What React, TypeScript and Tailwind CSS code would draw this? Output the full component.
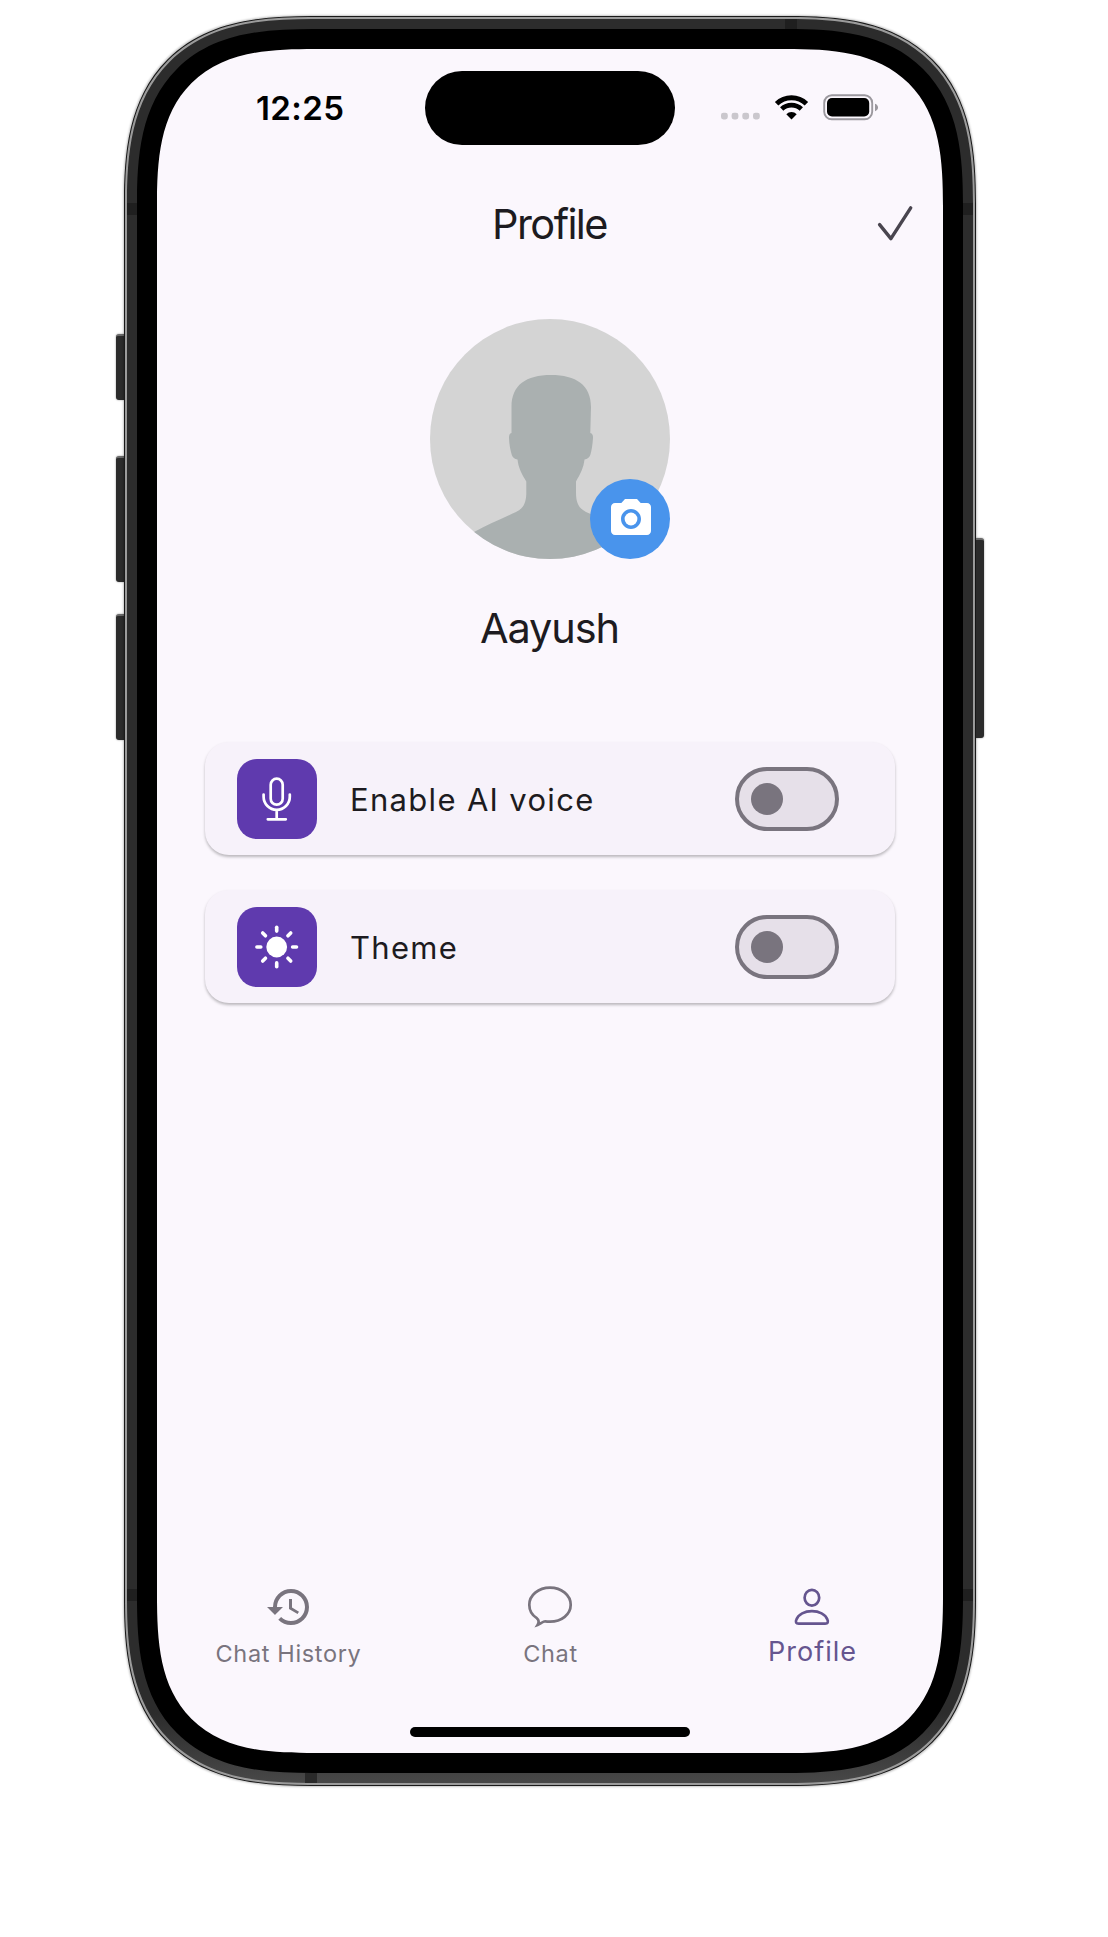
import { MdCameraAlt, MdHistory } from "react-icons/md";
import type { ReactNode } from "react";

function SideButton({ className }: { className: string }) {
  return (
    <div
      className={
        "border-t-2 border-[#6a6a6a] bg-[#2b2b2b] shadow-[0_0_2px_rgba(0,0,0,0.45)] " + className
      }
    />
  );
}

function StatusIcons() {
  return (
    <svg className="h-[30px] w-[160px]" viewBox="0 0 160 30" fill="none">
      <g fill="#cac7cd">
        <rect x="1" y="19.7" width="6.8" height="6.8" rx="2.4" />
        <rect x="11.6" y="19.7" width="6.8" height="6.8" rx="2.4" />
        <rect x="22.3" y="19.7" width="6.8" height="6.8" rx="2.4" />
        <rect x="33" y="19.7" width="6.8" height="6.8" rx="2.4" />
      </g>
      <path d="M56.600 10.700A21.600 21.600 0 0 1 86.400 10.700" stroke="#000" strokeWidth="5" />
      <path d="M61.700 16.100A14.200 14.200 0 0 1 81.300 16.100" stroke="#000" strokeWidth="4.800" />
      <path d="M66.300 21.200A7.300 7.300 0 0 1 76.700 21.200L71.500 26.400Z" fill="#000" />
      <rect x="104.200" y="2.300" width="48" height="24" rx="7.600" stroke="#9b989e" strokeWidth="1.900" />
      <rect x="107" y="5" width="42.200" height="18.500" rx="5" fill="#000" />
      <path d="M155 10.800c1.900.6 3 2 3 3.700s-1.100 3.100-3 3.700Z" fill="#9b989e" />
    </svg>
  );
}

function CheckIcon() {
  return (
    <svg className="mr-7 size-10 justify-self-end" viewBox="0 0 40 40" fill="none" stroke="#49454f" strokeWidth="3.400" strokeLinecap="round" strokeLinejoin="round">
      <path d="M4.600 21.600L15.900 35.600L35.700 4.900" />
    </svg>
  );
}

function Silhouette() {
  return (
    <svg className="size-60 rounded-full bg-[#d4d4d4]" viewBox="0 0 240 240" fill="#aab0b0">
      <path d="M81.500 114V88C81.500 66 96 56 121 56C146 56 161 66 161 88L160.300 114C162.500 114.500 163.200 116.500 163 119C162.600 126 161.500 132 160.300 136C159.300 138.800 157.500 139.800 154.500 140.500C153.500 149 150.500 154.500 146 162.500V173C146 184 148.500 189 156 193C168 198.500 184 204.500 196 210.500L240 240H0L45 212.500C57 206 72 199.500 86 193C93 189.500 95.800 185 96.300 175V162.500C91.500 154.500 88.500 149 87.500 140.500C84.500 140 82.800 138.800 81.800 136C80.300 131 79.200 125 79 119C78.900 116.500 79.500 114.500 81.500 114Z" />
    </svg>
  );
}

function MicIcon() {
  return (
    <svg className="size-20" viewBox="0 0 80 80" fill="none" stroke="#fff" strokeWidth="2.700" strokeLinecap="round">
      <rect x="33.700" y="19.700" width="12" height="26" rx="6" />
      <path d="M26.600 35.500V37.700A13.100 13.100 0 0 0 52.800 37.700V35.500M39.700 51V60M30.800 60.300H48.800" />
    </svg>
  );
}

const rayAngles = [0, 45, 90, 135, 180, 225, 270, 315];

function SunIcon() {
  return (
    <svg className="size-20" viewBox="0 0 80 80" fill="none" stroke="#fff" strokeWidth="3.600" strokeLinecap="round">
      <circle cx="39.700" cy="40" r="10.400" fill="#fff" stroke="none" />
      {rayAngles.map((a) => (
        <path key={a} d="M39.700 24.100V20.200" transform={`rotate(${a} 39.700 40)`} />
      ))}
    </svg>
  );
}

function ChatIcon() {
  return (
    <svg className="size-12" viewBox="0 0 48 48" fill="none" stroke="#79747e" strokeWidth="2.700" strokeLinejoin="miter">
      <path d="M10.800 35.200C6 32.200 3.300 27.400 3.300 21.800C3.300 12.200 12.400 4.600 24 4.600S44.700 12.200 44.700 21.800S35.600 38.700 24 38.700C21.600 38.700 20 38.300 18.300 38.500C15.800 39.200 14 41 11.600 41.900C13 39.600 12.700 36.800 10.800 35.200Z" />
    </svg>
  );
}

function PersonIcon() {
  return (
    <svg className="size-12" viewBox="0 0 48 48" fill="none" stroke="#65558f" strokeWidth="2.700">
      <ellipse cx="23.900" cy="14.700" rx="7.300" ry="7.900" />
      <path d="M10.600 40.600C8 40.600 7.400 39 8.300 36.700C10.300 31.200 16.800 28.200 23.900 28.200S37.500 31.200 39.500 36.700C40.400 39 39.800 40.600 37.200 40.600Z" />
    </svg>
  );
}

function Card({ icon, label }: { icon: ReactNode; label: string }) {
  return (
    <div className="flex h-[113px] w-[690px] items-center rounded-[24px] bg-[#f7f2fa] pr-14 pl-8 shadow-[0_2px_3px_rgba(0,0,0,0.26)]">
      <div className="size-20 rounded-[20px] bg-[#5f3aae]">{icon}</div>
      <span className="ml-[33px] flex-1 pt-[2px] text-[31px] leading-none tracking-[1.32px] text-[#1d1b20]">{label}</span>
      <div className="flex h-16 w-[104px] items-center rounded-full border-4 border-[#79747e] bg-[#e6e0e9] pl-3">
        <div className="size-8 rounded-full bg-[#79747e]" />
      </div>
    </div>
  );
}

export default function App() {
  return (
    <div className="flex h-[1937px] w-[1108px] items-start bg-white pt-4 pl-[116px] font-['Inter',sans-serif]">
      <div className="flex w-2 flex-col pt-[318px]">
        <SideButton className="h-[66px] rounded-l-[3px]" />
        <SideButton className="mt-14 h-[126px] rounded-l-[3px]" />
        <SideButton className="mt-8 h-[126px] rounded-l-[3px]" />
      </div>
      <div className="w-[852px] rounded-[188px] border border-[#1a1a1a] bg-[#9b9b9b] p-[2px] shadow-[0_0_2px_1px_rgba(0,0,0,0.22)] [corner-shape:superellipse(1.4)]">
        <div className="relative rounded-[185px] bg-linear-to-b from-[#2c2c2c] from-96% to-[#484848] p-[10px] [corner-shape:superellipse(1.4)]">
          <div className="absolute top-[184px] left-0 h-3 w-[10px] bg-[#1f1f1f]" />
          <div className="absolute top-[184px] right-0 h-3 w-[10px] bg-[#1f1f1f]" />
          <div className="absolute top-[1570px] left-0 h-3 w-[10px] bg-[#1f1f1f]" />
          <div className="absolute top-[1570px] right-0 h-3 w-[10px] bg-[#1f1f1f]" />
          <div className="absolute top-0 left-[658px] h-[10px] w-3 bg-[#1f1f1f]" />
          <div className="absolute bottom-0 left-[178px] h-[10px] w-3 bg-[#2a2a2a]" />
          <div className="rounded-[176px] bg-black p-5 [corner-shape:superellipse(1.43)]">
            <div className="flex h-[1704px] flex-col items-center overflow-hidden rounded-[158px] bg-[#fbf7fd] [corner-shape:superellipse(1.5)]">
              <div className="flex h-[118px] w-full shrink-0 pt-[22px]">
                <div className="flex h-[74px] w-[268px] items-center pl-[99px] text-[33px] leading-none font-semibold tracking-[0.4px] text-black">
                  12:25
                </div>
                <div className="h-[74px] w-[250px] rounded-full bg-black" />
                <div className="flex h-[74px] w-[268px] items-center pl-[45px]">
                  <StatusIcons />
                </div>
              </div>
              <div className="grid h-28 w-full shrink-0 grid-cols-[1fr_auto_1fr] items-center">
                <span />
                <h1 className="pt-[3px] pr-[1px] text-[41.5px] leading-none tracking-[-1.6px] text-[#1d1b20]">Profile</h1>
                <CheckIcon />
              </div>
              <div className="relative mt-10">
                <Silhouette />
                <div className="absolute right-0 bottom-0 flex size-20 items-center justify-center rounded-full bg-[#4994ec] pl-[1px]">
                  <MdCameraAlt className="size-12 text-white" />
                </div>
              </div>
              <h2 className="mt-[39px] pr-[1px] text-[41.5px] leading-[60px] tracking-[-1.1px] text-[#1d1b20]">Aayush</h2>
              <div className="mt-[84px] flex flex-col gap-[35px]">
                <Card label="Enable AI voice" icon={<MicIcon />} />
                <Card label="Theme" icon={<SunIcon />} />
              </div>
              <nav className="mt-auto grid w-full grid-cols-3 text-[#79747e]">
                <div className="flex flex-col items-center pl-[1px]">
                  <MdHistory className="size-12" />
                  <span className="mt-[9px] text-[23.5px] leading-7 tracking-[0.65px]">Chat History</span>
                </div>
                <div className="flex flex-col items-center">
                  <ChatIcon />
                  <span className="mt-[9px] pl-[1px] text-[23.5px] leading-7 tracking-[0.65px]">Chat</span>
                </div>
                <div className="flex flex-col items-center text-[#65558f]">
                  <PersonIcon />
                  <span className="mt-[7px] pl-[1px] text-[27px] leading-7 tracking-[1px]">Profile</span>
                </div>
              </nav>
              <div className="mt-[59px] mb-4 h-[10px] w-[280px] shrink-0 rounded-full bg-black" />
            </div>
          </div>
        </div>
      </div>
      <div className="w-2 pt-[522px]">
        <SideButton className="h-[200px] rounded-r-[3px]" />
      </div>
    </div>
  );
}
